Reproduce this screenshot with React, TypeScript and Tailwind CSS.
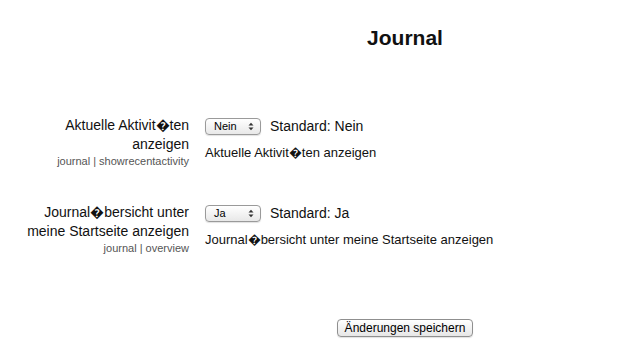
import React from "react";

const Sel = ({ v }: { v: string }) => (
  <div className="flex h-[17px] w-[56px] items-center justify-between rounded-[4px] border border-[#9a9a9a] bg-gradient-to-b from-white to-[#e8e8e8] pl-[8px] pr-[6px] text-[11px] leading-none text-black shadow-[0_1px_1px_rgba(0,0,0,0.12)]">
    <span>{v}</span>
    <svg width="6" height="9" viewBox="0 0 6 9">
      <path d="M0.5 3.5 L3 0.8 L5.5 3.5 Z" fill="#333" />
      <path d="M0.5 5.5 L3 8.2 L5.5 5.5 Z" fill="#333" />
    </svg>
  </div>
);

const Row = ({
  l1,
  l2,
  small,
  v,
  desc,
}: {
  l1: string;
  l2: string;
  small: string;
  v: string;
  desc: string;
}) => (
  <div className="flex">
    <div className="w-[190px] pr-[1px] text-right">
      <div className="whitespace-nowrap text-[14px] leading-[19px] text-[#111]">
        {l1}
        <br />
        {l2}
      </div>
      <div className="whitespace-nowrap text-[11px] leading-[14px] text-[#555]">{small}</div>
    </div>
    <div className="ml-[15px] pt-[2px]">
      <div className="flex h-[17px] items-center gap-[9px]">
        <Sel v={v} />
        <span className="text-[14px] leading-[17px] text-[#111]">Standard: {v}</span>
      </div>
      <div className="mt-[10px] whitespace-nowrap text-[13px] leading-[16px] text-[#111]">{desc}</div>
    </div>
  </div>
);

export default function App() {
  const F = { fontFamily: '"Liberation Sans", Arial, sans-serif' };
  return (
    <div className="h-[354px] w-[627px] overflow-hidden bg-white text-black" style={F}>
      <div className="ml-[183px] pt-[25px] text-center text-[21px] font-bold leading-[26px] text-[#111]">
        Journal
      </div>
      <div className="mt-[65px] flex flex-col gap-[35px]">
        <Row
          l1={"Aktuelle Aktivit\uFFFDten"}
          l2="anzeigen"
          small="journal | showrecentactivity"
          v="Nein"
          desc={"Aktuelle Aktivit\uFFFDten anzeigen"}
        />
        <Row
          l1={"Journal\uFFFDbersicht unter"}
          l2="meine Startseite anzeigen"
          small="journal | overview"
          v="Ja"
          desc={"Journal\uFFFDbersicht unter meine Startseite anzeigen"}
        />
      </div>
      <div className="ml-[183px] mt-[64px] flex justify-center">
        <button className="h-[18px] rounded-[4px] border border-[#8f8f8f] bg-gradient-to-b from-white to-[#e6e6e6] px-[7px] text-[12px] leading-none text-black shadow-[0_1px_1px_rgba(0,0,0,0.12)]">
          {"\u00C4"}nderungen speichern
        </button>
      </div>
    </div>
  );
}
